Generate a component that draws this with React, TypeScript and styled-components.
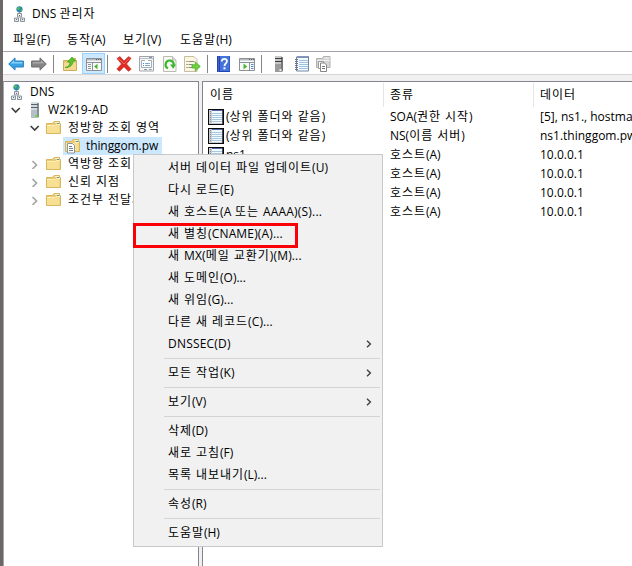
import React from "react";
import styled, { createGlobalStyle } from "styled-components";

const Global = createGlobalStyle`
  * { box-sizing: border-box; }
  html, body { margin: 0; padding: 0; overflow: hidden; }
  body {
    font-family: "Open Sans", "Noto Sans CJK KR", sans-serif;
    font-size: 12px;
    color: #000;
    background: #fff;
  }
  svg { display: block; flex: none; }
`;

const Window = styled.div`
  position: relative;
  width: 632px;
  height: 566px;
  overflow: hidden;
  display: flex;
  flex-direction: column;
  background: #fff;
  border-left: 3px solid #6b6767;
`;

const EdgeShade = styled.div`
  position: absolute;
  left: -3px;
  top: 0;
  width: 1px;
  height: 100%;
  background: #2b2929;
`;

const LabelText = styled.span<{ $track?: number }>`
  white-space: pre;
  line-height: 18px;
  letter-spacing: ${(p) => p.$track ?? 0}px;
`;

const Hangul = styled.span`
  letter-spacing: 0.95px;
`;

const Label = ({ children, track }: { children: string; track?: number }) => (
  <LabelText $track={track}>
    {children
      .split(/([\uac00-\ud7a3][\uac00-\ud7a3 ]*)/)
      .map((part, i) => (i % 2 ? <Hangul key={i}>{part}</Hangul> : part))}
  </LabelText>
);

const TitleBar = styled.header`
  flex: none;
  height: 28px;
  display: flex;
  align-items: center;
  padding-left: 11px;
  gap: 6px;
`;

const MenuBar = styled.nav`
  flex: none;
  height: 24px;
  display: flex;
  align-items: center;
  padding-left: 10px;
  border-bottom: 1px solid #a5a3ac;
`;

const MenuBarItem = styled.div<{ $w: number }>`
  width: ${(p) => p.$w}px;
  flex: none;
  display: flex;
`;

const ToolBar = styled.div`
  flex: none;
  height: 23px;
  display: flex;
  align-items: center;
  padding: 1px 0 0 5px;
  border-bottom: 1px solid #d5d5d5;
`;

const ToolSlot = styled.div<{ $w?: number; $active?: boolean }>`
  flex: none;
  width: ${(p) => p.$w ?? 23}px;
  height: 21px;
  display: flex;
  align-items: center;
  justify-content: center;
  padding-top: 1px;
  ${(p) => p.$active && "background: #cce8ff; border: 1px solid #99d1ff;"}
`;

const ToolDivider = styled.div<{ $before?: number; $after?: number }>`
  flex: none;
  width: 1px;
  height: 18px;
  margin: 0 ${(p) => p.$after ?? 4}px 0 ${(p) => p.$before ?? 3}px;
  background: #858585;
`;

const Body = styled.main`
  flex: 1;
  display: flex;
  gap: 3px;
  padding-top: 6px;
  background: #f0f0f0;
`;

const TreePane = styled.section`
  width: 196px;
  flex: none;
  overflow: hidden;
  background: #fff;
  border: 1px solid #86838f;
  border-bottom: 0;
  border-left-color: #a9a6a6;
  padding-top: 1px;
`;

const TreeRow = styled.div<{ $indent: number }>`
  height: 18px;
  display: flex;
  align-items: center;
  padding-left: ${(p) => p.$indent}px;
`;

const Expander = styled.div<{ $w?: number }>`
  width: ${(p) => p.$w ?? 20}px;
  flex: none;
  display: flex;
`;

const Node = styled.div<{ $gap: number; $selected?: boolean }>`
  height: 18px;
  flex: none;
  display: flex;
  align-items: center;
  gap: ${(p) => p.$gap}px;
  ${(p) => p.$selected && "background: #cce8ff; width: 99px; padding-left: 2px;"}
`;

const ListPane = styled.section`
  flex: 1;
  min-width: 0;
  overflow: hidden;
  background: #fff;
  border: 1px solid #86838f;
  border-width: 1px 0 0 1px;
`;

const Columns = styled.div`
  display: grid;
  grid-template-columns: 181px 150px 1fr;
  white-space: nowrap;
`;

const HeaderRow = styled(Columns)`
  height: 25px;
  padding-top: 1px;
`;

const HeaderCell = styled.div<{ $pad?: number }>`
  display: flex;
  align-items: center;
  padding-left: ${(p) => p.$pad ?? 6}px;
  border-right: 1px solid #e5e5e5;
  &:last-child { border-right: 0; }
`;

const ListRow = styled(Columns)`
  height: 19px;
`;

const Cell = styled.div<{ $pad?: number }>`
  display: flex;
  align-items: center;
  gap: 2px;
  overflow: hidden;
  padding-left: ${(p) => p.$pad ?? 6}px;
`;

const ContextMenu = styled.div`
  position: absolute;
  left: 130px;
  top: 154px;
  width: 250px;
  height: 393px;
  padding: 2px;
  background: #f1f1f1;
  border: 1px solid #c8c8c8;
`;

const ContextItem = styled.div`
  height: 22px;
  display: flex;
  align-items: center;
  justify-content: space-between;
  padding: 0 8px 0 32px;
`;

const ContextRule = styled.div`
  height: 1px;
  margin: 3px 0 3px 28px;
  background: #d4d4d4;
`;

const Highlight = styled.div`
  position: absolute;
  left: 130px;
  top: 223px;
  width: 165px;
  height: 25px;
  border: 3px solid #fb0007;
`;

const DnsIcon = () => (
  <svg width="12" height="17" viewBox="0 0 12 17">
    <circle cx="5.500" cy="3.300" r="3.100" fill="#2e86b4" />
    <path d="M2.800 2.200 5 .5 6 2.500 4.500 4.500zM6.500 3.500 8.500 3 7 6z" fill="#4fc14b" />
    <path d="M5.500 6v2.500" stroke="#8c949c" />
    <path d="M3.500 7.500h4v3.500h-4zM.5 12h4v3.500h-4zM6.500 12h4v3.500h-4z" fill="#e4e8ec" stroke="#8c949c" />
    <path d="M5 9.500h1M2 13.500h1M8 13.500h1" stroke="#68717b" />
  </svg>
);

const ServerIcon = ({ dark }: { dark?: boolean }) => (
  <svg width="10" height="16" viewBox="0 0 10 16">
    <path d="M1 1h7l1 1v13l-1 1H1z" fill={dark ? "#9b9b9b" : "#b5c0c6"} />
    <path d="M1 0h7v2H1z" fill={dark ? "#c9c9c9" : "#d8dfe3"} />
    <path d="M7 1h2v14H7z" fill={dark ? "#777" : "#84919a"} />
    <path d="M1 2.500h7M1 5.500h7" stroke={dark ? "#3d3d3d" : "#56636c"} />
    <path d="M1 4h6M1 7h6" stroke="#eef1f3" />
    <path d="M5.500 13h2v2h-2z" fill={dark ? "#e8e8e8" : "#5edd32"} />
  </svg>
);

const FolderShape = () => (
  <>
    <path d="M.5 3.500h6l1.500-2h5.500v2h1v10H.5z" fill="#eccb70" stroke="#d9b65e" />
    <path d="M1 5h12.500v8H1z" fill="#f7df94" />
    <path d="M9 2.500h4" stroke="#fff4c5" />
    <path d="M11 3h2v1h-2z" fill="#4a9bd5" />
    <path d="M1 5.500h8l1-1h4" stroke="#fff0b7" fill="none" />
  </>
);

const FolderIcon = () => (
  <svg width="15" height="16" viewBox="0 0 15 16"><FolderShape /></svg>
);

const ZoneIcon = () => (
  <svg width="15" height="16" viewBox="0 0 15 16">
    <FolderShape />
    <path d="M2.500 5.500h5l2 2v7.500h-7z" fill="#fff" stroke="#8c96a2" />
    <path d="M4 8.500h3M4 10.500h4M4 12.500h4" stroke="#6680a0" />
  </svg>
);

const RecordIcon = () => (
  <svg width="16" height="16" viewBox="0 0 16 16">
    <path d="M0 0h16v16H0z" fill="#0b0b0b" />
    <path d="M1 1h14v14H1z" fill="#c9cbd2" />
    <path d="M4 2h10v12H4z" fill="#f1fbff" />
    <path d="M4 1.500h10" stroke="#5266a8" />
    <path d="M4 4.500h10M4 6.500h10M4 8.500h10M4 10.500h10M4 12.500h10" stroke="#a8c8dc" />
    <path d="M2.500 2v12" stroke="#8a8e94" strokeDasharray="1 1" />
    <path d="M14.500 1v14" stroke="#474a5c" />
  </svg>
);

const Chevron = ({ open }: { open?: boolean }) =>
  open ? (
    <svg width="10" height="8" viewBox="0 0 10 8">
      <path d="m.7 2 4 4 4-4" fill="none" stroke="#404040" strokeWidth="1.700" />
    </svg>
  ) : (
    <svg width="10" height="10" viewBox="0 0 10 10">
      <path d="m2.500 2 4 4-4 4" fill="none" stroke="#a6a6a6" strokeWidth="1.700" />
    </svg>
  );

const SubmenuArrow = () => (
  <svg width="6" height="8" viewBox="0 0 6 8">
    <path d="m1 .7 3.400 3.300L1 7.300" fill="none" stroke="#404040" strokeWidth="1.400" />
  </svg>
);

const ArrowIcon = ({ back }: { back?: boolean }) => (
  <svg width="16" height="14" viewBox="0 0 16 14">
    {back ? (
      <>
        <path d="M.7 7 7 .9V4h8.400v6H7v3.100z" fill="#37a3e6" stroke="#2f7dbb" />
        <path d="M2.500 6.600 6 3.300V5h8.300v1.500z" fill="#85d1fa" />
      </>
    ) : (
      <>
        <path d="M15.300 7 9 .9V4H.6v6H9v3.100z" fill="#858585" stroke="#6c6c6c" />
        <path d="M13.500 6.600 10 3.300V5H1.700v1.500z" fill="#a9a9a9" />
      </>
    )}
  </svg>
);

const UpFolderIcon = () => (
  <svg width="15" height="16" viewBox="0 0 15 16">
    <path d="M.5 4.500h7l1-2h4v2h1v10H.5z" fill="#e9c977" stroke="#cfac5c" />
    <path d="M1 7h12v7H1z" fill="#f3da90" />
    <path d="M2 11.500c3.500-.5 5-2.500 5-5.500H4.500L9 1l3.500 4H10c0 4-3 6.800-8 6.500z" fill="#58c52c" stroke="#3ba020" strokeWidth=".7" />
  </svg>
);

const PaneIcon = ({ flip }: { flip?: boolean }) => (
  <svg width="16" height="13" viewBox="0 0 16 13">
    <path d="M.5.5h15v12H.5z" fill="#fafafa" stroke="#8d9094" />
    <path d="M1 1h14v1.500H1z" fill="#b4b8bd" />
    <path d="M1 4.500h14" stroke="#8a929b" />
    <path d="M10 1.500h1M12 1.500h1M14 1.500h1" stroke="#4c5a6a" />
    {flip ? (
      <>
        <path d="M10.500 5v7" stroke="#8a929b" />
        <path d="M12 6.500h2.500M12 8.500h2.500M12 10.500h2.500" stroke="#5b8bc4" />
        <path d="M4.500 5.500v6L8.300 8.500z" fill="#46b82a" />
      </>
    ) : (
      <>
        <path d="M6.500 5v7" stroke="#8a929b" />
        <path d="M2 6.500h3M2 8.500h3M2 10.500h3" stroke="#8a929b" />
        <path d="M11.500 5.800v5.400L8 8.500z" fill="#46b82a" />
      </>
    )}
  </svg>
);

const DeleteIcon = () => (
  <svg width="16" height="16" viewBox="0 0 16 16">
    <path d="M1 2.500 4 .6l4 4.500L12.500.7l2.600 1.500L10.500 8l4.700 5.200-2.800 2.100L8 10.700l-4.500 4.600L.8 13l4.700-5z" fill="#e02b25" stroke="#c6302b" strokeWidth=".7" />
    <path d="m2.500 2.600 5.500 5.400 5-5.500" fill="none" stroke="#f1695e" />
  </svg>
);

const PropertiesIcon = () => (
  <svg width="15" height="16" viewBox="0 0 15 16">
    <path d="M.5.500h14v14.500H.5z" fill="#f7f7f7" stroke="#a0a4aa" />
    <path d="M1 2.500h13" stroke="#bcc0c6" />
    <path d="M2.500 4.500h10v7h-10z" fill="#fff" stroke="#a7adb5" />
    <path d="M6 4.500h3" stroke="#fff" />
    <path d="M4 7.500h1M4 9.500h1" stroke="#4385c6" />
    <path d="M6 7.500h5M6 9.500h5" stroke="#79a9d4" />
    <path d="M5 13.500h3M10 13.500h2.500" stroke="#8c96a1" />
    <path d="M10 1.500h3" stroke="#8795ab" />
  </svg>
);

const RefreshIcon = () => (
  <svg width="14" height="16" viewBox="0 0 14 16">
    <path d="M.5.5h9l3.500 3.500v11.500H.5z" fill="#f8f8f3" stroke="#bcbcb4" />
    <path d="M9.500.5V4H13" fill="#ddd" stroke="#bcbcb4" />
    <path d="M5 12.200A4 4 0 1 1 10.600 9" fill="none" stroke="#3ab52f" strokeWidth="2.200" />
    <path d="M7 8.500h6L10.200 12.700z" fill="#3ab52f" />
  </svg>
);

const ExportIcon = () => (
  <svg width="17" height="16" viewBox="0 0 17 16">
    <path d="M.5.5h9.500L13 3.500v12H.5z" fill="#fbf6e2" stroke="#c5bda2" />
    <path d="M2.500 5.500h1M2.500 8.500h1M2.500 11.500h1" stroke="#585858" />
    <path d="M4.500 5.500h6M4.500 8.500h4M4.500 11.500h4" stroke="#8b8b84" />
    <path d="M8 8.800h3.300V6l5 4.400-5 4.500v-2.900H8z" fill="#6bd13d" stroke="#4cae2c" strokeWidth=".8" />
  </svg>
);

const HelpIcon = () => (
  <svg width="13" height="16" viewBox="0 0 13 16">
    <path d="M0 0h13v16H0z" fill="#2344b0" />
    <path d="M3 0h9.500v15H3z" fill="#4573dc" />
    <path d="M1.500 0v16" stroke="#4463c8" />
    <path d="M4.800 5.500c-.2-3.600 5.400-3.400 5.200-.2C9.900 7.300 7.500 7.500 7.500 10" fill="none" stroke="#fff" strokeWidth="1.800" />
    <path d="M6.500 11.300h2v2h-2z" fill="#fff" />
  </svg>
);

const NotebookIcon = () => (
  <svg width="14" height="16" viewBox="0 0 14 16">
    <path d="M1.500 1h12v14h-12z" fill="#f6fbff" stroke="#7385a3" />
    <path d="M2 1h12" stroke="#4e68a0" />
    <path d="M4 4.500h9M4 6.500h9M4 8.500h9M4 10.500h9M4 12.500h9" stroke="#9cc2e2" />
    <path d="M0 3.500h3M0 5.500h3M0 7.500h3M0 9.500h3M0 11.500h3M0 13.500h3" stroke="#6d7680" />
  </svg>
);

const CopyFolderIcon = () => (
  <svg width="15" height="16" viewBox="0 0 15 16">
    <path d="M.5 2.500h6l1-2h6.500v11H.5z" fill="#d6d6d6" stroke="#b0b0b0" />
    <path d="M8.500 2h5" stroke="#f3f3f3" />
    <path d="M1 4.500h13" stroke="#eee" />
    <path d="M2.500 5.500h5v7h-5z" fill="#fff" stroke="#9a9a9a" />
    <path d="M4.500 7h4l2 2v6.500h-6z" fill="#fff" stroke="#858585" />
    <path d="M6 10.500h3M6 12.500h3" stroke="#777" />
  </svg>
);

const menuBar = [
  { text: "파일(F)", w: 54 },
  { text: "동작(A)", w: 56 },
  { text: "보기(V)", w: 57 },
  { text: "도움말(H)", w: 60 },
];

const records = [
  { name: "(상위 폴더와 같음)", type: "SOA(권한 시작)", data: "[5], ns1., hostmaster." },
  { name: "(상위 폴더와 같음)", type: "NS(이름 서버)", data: "ns1.thinggom.pw." },
  { name: "ns1", type: "호스트(A)", data: "10.0.0.1" },
  { name: "", type: "호스트(A)", data: "10.0.0.1" },
  { name: "", type: "호스트(A)", data: "10.0.0.1" },
  { name: "", type: "호스트(A)", data: "10.0.0.1" },
];

type Entry = { text: string; track?: number; sub?: boolean } | null;

const contextEntries: Entry[] = [
  { text: "서버 데이터 파일 업데이트(U)" },
  { text: "다시 로드(E)" },
  { text: "새 호스트(A 또는 AAAA)(S)...", track: 0.2 },
  { text: "새 별칭(CNAME)(A)...", track: 0.15 },
  { text: "새 MX(메일 교환기)(M)...", track: 0.15 },
  { text: "새 도메인(O)..." },
  { text: "새 위임(G)..." },
  { text: "다른 새 레코드(C)...", track: 0.1 },
  { text: "DNSSEC(D)", sub: true, track: 0.2 },
  null,
  { text: "모든 작업(K)", sub: true },
  null,
  { text: "보기(V)", sub: true },
  null,
  { text: "삭제(D)" },
  { text: "새로 고침(F)" },
  { text: "목록 내보내기(L)..." },
  null,
  { text: "속성(R)" },
  null,
  { text: "도움말(H)" },
];

export default function App() {
  return (
    <>
      <Global />
      <Window>
        <EdgeShade />
        <TitleBar>
          <DnsIcon />
          <Label>DNS 관리자</Label>
        </TitleBar>
        <MenuBar>
          {menuBar.map((m) => (
            <MenuBarItem key={m.text} $w={m.w}><Label>{m.text}</Label></MenuBarItem>
          ))}
        </MenuBar>
        <ToolBar>
          <ToolSlot $w={16}><ArrowIcon back /></ToolSlot>
          <ToolSlot $w={30}><ArrowIcon /></ToolSlot>
          <ToolDivider $before={-1} $after={5} />
          <ToolSlot $w={23}><UpFolderIcon /></ToolSlot>
          <ToolSlot $w={23} $active><PaneIcon /></ToolSlot>
          <ToolDivider $before={2} />
          <ToolSlot><DeleteIcon /></ToolSlot>
          <ToolSlot><PropertiesIcon /></ToolSlot>
          <ToolSlot><RefreshIcon /></ToolSlot>
          <ToolSlot><ExportIcon /></ToolSlot>
          <ToolDivider />
          <ToolSlot><HelpIcon /></ToolSlot>
          <ToolSlot><PaneIcon flip /></ToolSlot>
          <ToolDivider $after={5} />
          <ToolSlot><ServerIcon dark /></ToolSlot>
          <ToolSlot><NotebookIcon /></ToolSlot>
          <ToolSlot $w={21}><CopyFolderIcon /></ToolSlot>
        </ToolBar>
        <Body>
          <TreePane>
            <TreeRow $indent={7}><Node $gap={7}><DnsIcon /><Label>DNS</Label></Node></TreeRow>
            <TreeRow $indent={7}>
              <Expander $w={19}><Chevron open /></Expander>
              <Node $gap={8}><ServerIcon /><Label track={0.15}>W2K19-AD</Label></Node>
            </TreeRow>
            <TreeRow $indent={26}>
              <Expander $w={16}><Chevron open /></Expander>
              <Node $gap={7}><FolderIcon /><Label>정방향 조회 영역</Label></Node>
            </TreeRow>
            <TreeRow $indent={59}>
              <Node $gap={6} $selected><ZoneIcon /><Label track={-0.1}>thinggom.pw</Label></Node>
            </TreeRow>
            {["역방향 조회 영역", "신뢰 지점", "조건부 전달자"].map((t) => (
              <TreeRow key={t} $indent={26}>
                <Expander $w={16}><Chevron /></Expander>
                <Node $gap={7}><FolderIcon /><Label>{t}</Label></Node>
              </TreeRow>
            ))}
          </TreePane>
          <ListPane>
            <HeaderRow>
              <HeaderCell $pad={7}><Label>이름</Label></HeaderCell>
              <HeaderCell><Label>종류</Label></HeaderCell>
              <HeaderCell><Label>데이터</Label></HeaderCell>
            </HeaderRow>
            {records.map((r, i) => (
              <ListRow key={i}>
                <Cell $pad={5}><RecordIcon /><Label>{r.name}</Label></Cell>
                <Cell><Label>{r.type}</Label></Cell>
                <Cell><Label>{r.data}</Label></Cell>
              </ListRow>
            ))}
          </ListPane>
        </Body>
        <ContextMenu>
          {contextEntries.map((e, i) =>
            e ? (
              <ContextItem key={i}>
                <Label track={e.track}>{e.text}</Label>
                {e.sub && <SubmenuArrow />}
              </ContextItem>
            ) : (
              <ContextRule key={i} />
            )
          )}
        </ContextMenu>
        <Highlight />
      </Window>
    </>
  );
}
